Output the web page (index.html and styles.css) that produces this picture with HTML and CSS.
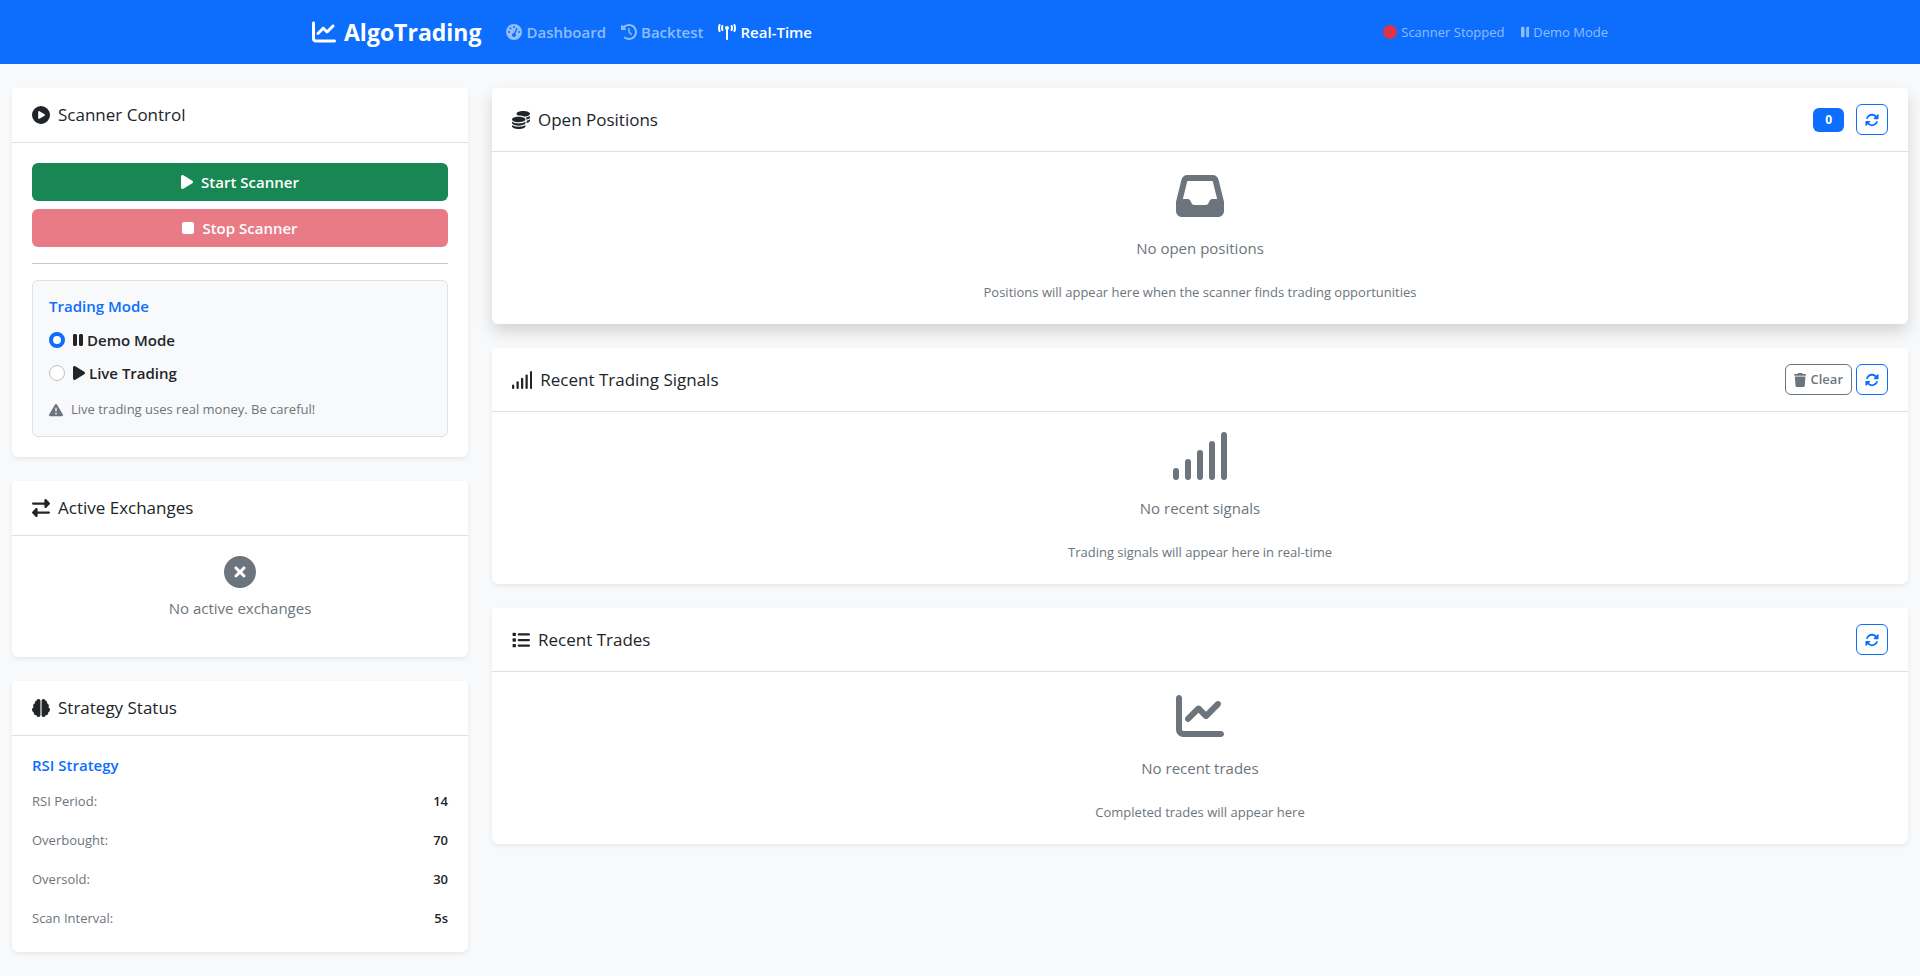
FILE: index.html
```html
<!DOCTYPE html>
<html lang="en">
<head>
<meta charset="utf-8">
<meta name="viewport" content="width=device-width, initial-scale=1">
<title>AlgoTrading - Real-Time</title>
<link rel="stylesheet" href="styles.css">
</head>
<body>
<svg class="sprite" aria-hidden="true">
  <symbol id="i-chart" viewBox="0 0 512 512"><path d="M64 64c0-17.7-14.3-32-32-32S0 46.3 0 64V400c0 44.2 35.8 80 80 80H480c17.7 0 32-14.3 32-32s-14.3-32-32-32H80c-8.8 0-16-7.2-16-16V64zm406.6 86.6c12.5-12.5 12.5-32.8 0-45.3s-32.8-12.5-45.3 0L320 210.7l-57.4-57.4c-12.5-12.5-32.8-12.5-45.3 0l-112 112c-12.5 12.5-12.5 32.8 0 45.3s32.8 12.5 45.3 0L240 221.3l57.4 57.4c12.5 12.5 32.8 12.5 45.3 0l128-128z"/></symbol>
  <symbol id="i-gauge" viewBox="0 0 512 512"><path fill-rule="evenodd" d="M0 256a256 256 0 1 1 512 0A256 256 0 1 1 0 256zM288 96a32 32 0 1 0 -64 0 32 32 0 1 0 64 0zM256 416c35.3 0 64-28.7 64-64c0-17.4-6.9-33.1-18.1-44.6L366 161.7c5.3-12.1-.2-26.3-12.3-31.6s-26.3 .2-31.6 12.3L257.9 288c-.6 0-1.3 0-1.9 0c-35.3 0-64 28.7-64 64s28.7 64 64 64zM176 144a32 32 0 1 0 -64 0 32 32 0 1 0 64 0zM96 288a32 32 0 1 0 0-64 32 32 0 1 0 0 64zm352-32a32 32 0 1 0 -64 0 32 32 0 1 0 64 0z"/></symbol>
  <symbol id="i-history" viewBox="0 0 512 512"><path d="M75 75L41 41C25.9 25.9 0 36.6 0 57.9V168c0 13.3 10.7 24 24 24H134.1c21.4 0 32.1-25.9 17-41l-30.8-30.8C155 85.5 203 64 256 64c106 0 192 86 192 192s-86 192-192 192c-40.8 0-78.6-12.7-109.7-34.4c-14.5-10.1-34.4-6.6-44.6 7.9s-6.6 34.4 7.9 44.6C151.2 495 201.7 512 256 512c141.4 0 256-114.6 256-256S397.4 0 256 0C185.3 0 121.3 28.7 75 75zm181 53c-13.3 0-24 10.7-24 24V256c0 6.4 2.5 12.5 7 17l72 72c9.4 9.4 24.6 9.4 33.9 0s9.4-24.6 0-33.9l-65-65V152c0-13.3-10.7-24-24-24z"/></symbol>
  <symbol id="i-tower" viewBox="0 0 576 512"><path d="M80.3 44C69.8 69.9 64 98.2 64 128s5.8 58.1 16.3 84c6.6 16.4-1.3 35-17.7 41.7s-35-1.3-41.7-17.7C7.4 202.6 0 166.1 0 128S7.4 53.4 20.9 20C27.6 3.6 46.2-4.3 62.6 2.3S86.9 27.6 80.3 44zM555.1 20C568.6 53.4 576 89.9 576 128s-7.4 74.6-20.9 108c-6.6 16.4-25.3 24.3-41.7 17.7S489.1 228.4 495.7 212c10.5-25.9 16.3-54.2 16.3-84s-5.8-58.1-16.3-84C489.1 27.6 497 9 513.4 2.3s35 1.3 41.7 17.7zM352 128c0 23.7-12.9 44.4-32 55.4V480c0 17.7-14.3 32-32 32s-32-14.3-32-32V183.4c-19.1-11.1-32-31.7-32-55.4c0-35.3 28.7-64 64-64s64 28.7 64 64zM170.6 76.8C163.8 92.4 160 109.7 160 128s3.8 35.6 10.6 51.2c7.1 16.2-.3 35.1-16.5 42.1s-35.1-.3-42.1-16.5c-10.3-23.6-16-49.6-16-76.8s5.7-53.2 16-76.8c7.1-16.2 25.9-23.6 42.1-16.5s23.6 25.9 16.5 42.1zM464 51.2c10.3 23.6 16 49.6 16 76.8s-5.7 53.2-16 76.8c-7.1 16.2-25.9 23.6-42.1 16.5s-23.6-25.9-16.5-42.1c6.8-15.6 10.6-32.9 10.6-51.2s-3.8-35.6-10.6-51.2c-7.1-16.2 .3-35.1 16.5-42.1s35.1 .3 42.1 16.5z"/></symbol>
  <symbol id="i-circle" viewBox="0 0 512 512"><circle cx="256" cy="256" r="256"/></symbol>
  <symbol id="i-pause" viewBox="0 0 320 512"><path d="M48 64C21.5 64 0 85.5 0 112V400c0 26.5 21.5 48 48 48H80c26.5 0 48-21.5 48-48V112c0-26.5-21.5-48-48-48H48zm192 0c-26.5 0-48 21.5-48 48V400c0 26.5 21.5 48 48 48h32c26.5 0 48-21.5 48-48V112c0-26.5-21.5-48-48-48H240z"/></symbol>
  <symbol id="i-play" viewBox="0 0 384 512"><path d="M73 39c-14.8-9.1-33.4-9.4-48.5-.9S0 62.6 0 80V432c0 17.4 9.4 33.4 24.5 41.9s33.7 8.1 48.5-.9L361 297c14.3-8.7 23-24.2 23-41s-8.7-32.2-23-41L73 39z"/></symbol>
  <symbol id="i-stop" viewBox="0 0 384 512"><path d="M0 128C0 92.7 28.7 64 64 64H320c35.3 0 64 28.7 64 64V384c0 35.3-28.7 64-64 64H64c-35.3 0-64-28.7-64-64V128z"/></symbol>
  <symbol id="i-play-circle" viewBox="0 0 512 512"><path fill-rule="evenodd" d="M0 256a256 256 0 1 1 512 0A256 256 0 1 1 0 256zM188.3 147.1c-7.6 4.2-12.3 12.3-12.3 20.9V344c0 8.7 4.7 16.7 12.3 20.9s16.8 4.1 24.3-.5l144-88c7.1-4.4 11.5-12.1 11.5-20.5s-4.4-16.1-11.5-20.5l-144-88c-7.4-4.5-16.7-4.7-24.3-.5z"/></symbol>
  <symbol id="i-warning" viewBox="0 0 512 512"><path fill-rule="evenodd" d="M256 32c14.2 0 27.3 7.5 34.5 19.8l216 368c7.3 12.4 7.3 27.7 .2 40.1S486.3 480 472 480H40c-14.3 0-27.6-7.7-34.7-20.1s-7-27.8 .2-40.1l216-368C228.7 39.5 241.8 32 256 32zm0 128c-13.3 0-24 10.7-24 24V296c0 13.3 10.7 24 24 24s24-10.7 24-24V184c0-13.3-10.7-24-24-24zm32 224a32 32 0 1 0 -64 0 32 32 0 1 0 64 0z"/></symbol>
  <symbol id="i-exchange" viewBox="0 0 512 512"><path d="M32 96l320 0V32c0-12.9 7.8-24.6 19.8-29.6s25.7-2.2 34.9 6.9l96 96c6 6 9.4 14.1 9.4 22.6s-3.4 16.6-9.4 22.6l-96 96c-9.2 9.2-22.9 11.9-34.9 6.9s-19.8-16.6-19.8-29.6V160L32 160c-17.7 0-32-14.3-32-32s14.3-32 32-32zM480 352c17.7 0 32 14.3 32 32s-14.3 32-32 32H160v64c0 12.9-7.8 24.6-19.8 29.6s-25.7 2.2-34.9-6.9l-96-96c-6-6-9.4-14.1-9.4-22.6s3.4-16.6 9.4-22.6l96-96c9.2-9.2 22.9-11.9 34.9-6.9s19.8 16.6 19.8 29.6l0 64H480z"/></symbol>
  <symbol id="i-times" viewBox="0 0 512 512"><path fill-rule="evenodd" d="M256 512A256 256 0 1 0 256 0a256 256 0 1 0 0 512zM175 175c9.4-9.4 24.6-9.4 33.9 0l47 47 47-47c9.4-9.4 24.6-9.4 33.9 0s9.4 24.6 0 33.9l-47 47 47 47c9.4 9.4 9.4 24.6 0 33.9s-24.6 9.4-33.9 0l-47-47-47 47c-9.4 9.4-24.6 9.4-33.9 0s-9.4-24.6 0-33.9l47-47-47-47c-9.4-9.4-9.4-24.6 0-33.9z"/></symbol>
  <symbol id="i-brain" viewBox="0 0 512 512"><path d="M184 0c30.9 0 56 25.1 56 56V456c0 30.9-25.1 56-56 56c-28.9 0-52.7-21.9-55.7-50.1c-5.2 1.4-10.7 2.1-16.3 2.1c-35.3 0-64-28.7-64-64c0-7.4 1.3-14.6 3.6-21.2C21.4 367.4 0 338.2 0 304c0-31.9 18.7-59.5 45.8-72.3C37.1 220.8 32 207 32 192c0-30.7 21.6-56.3 50.4-62.6C80.8 123.9 80 118 80 112c0-29.9 20.6-55.1 48.3-62.1C131.3 21.9 155.1 0 184 0zM328 0c28.9 0 52.6 21.9 55.7 49.9c27.8 7 48.3 32.1 48.3 62.1c0 6-.8 11.9-2.4 17.4c28.8 6.2 50.4 31.9 50.4 62.6c0 15-5.1 28.8-13.8 39.7C493.3 244.5 512 272.1 512 304c0 34.2-21.4 63.4-51.6 74.8c2.3 6.6 3.6 13.8 3.6 21.2c0 35.3-28.7 64-64 64c-5.6 0-11.1-.7-16.3-2.1c-3 28.2-26.8 50.1-55.7 50.1c-30.9 0-56-25.1-56-56V56c0-30.9 25.1-56 56-56z"/></symbol>
  <symbol id="i-coins" viewBox="0 0 512 512"><path d="M512 80c0 18-14.3 34.6-38.4 48c-29.1 16.1-72.5 27.5-122.3 30.9c-3.7-1.8-7.4-3.5-11.3-5C300.6 137.4 248.2 128 192 128c-8.3 0-16.4 .2-24.5 .6l-1.1-.6C142.3 114.6 128 98 128 80c0-44.2 86-80 192-80S512 35.8 512 80zM160.7 161.1c10.2-.7 20.7-1.1 31.3-1.1c62.2 0 117.4 12.3 152.5 31.4C369.3 204.9 384 221.7 384 240c0 4-.7 7.9-2.1 11.7c-4.6 13.2-17 25.3-35 35.5c-.1 .1-.3 .1-.4 .2c-.3 .2-.6 .3-.9 .5c-35 19.4-90.8 32-153.6 32c-59.6 0-112.9-11.3-148.2-29.1c-1.9-.9-3.7-1.9-5.5-2.9C14.3 274.6 0 258 0 240c0-34.8 53.4-64.5 128-75.4c10.5-1.5 21.4-2.7 32.7-3.5zM416 240c0-21.9-10.6-39.9-24.1-53.4c28.3-4.4 54.2-11.4 76.2-20.5c16.3-6.8 31.5-15.2 43.9-25.5V176c0 19.3-16.5 37.1-43.8 50.9c-14.6 7.4-32.4 13.7-52.4 18.5c.1-1.8 .2-3.5 .2-5.3zm-32 96c0 18-14.3 34.6-38.4 48c-1.8 1-3.6 1.9-5.5 2.9C304.9 404.7 251.6 416 192 416c-62.8 0-118.6-12.6-153.6-32C14.3 370.6 0 354 0 336V300.6c12.5 10.3 27.6 18.7 43.9 25.5C83.4 342.6 135.8 352 192 352s108.6-9.4 148.1-25.9c7.8-3.2 15.3-6.9 22.4-10.9c6.1-3.4 11.8-7.2 17.2-11.2c1.5-1.1 2.9-2.3 4.3-3.4V304v5.7V336zm32 0V304 278.1c19-4.2 36.5-9.5 52.1-16c16.3-6.8 31.5-15.2 43.9-25.5V272c0 10.5-5 21-14.9 30.9c-16.3 16.3-45 29.7-81.3 38.4c.1-1.7 .2-3.5 .2-5.3zM192 448c56.2 0 108.6-9.4 148.1-25.9c16.3-6.8 31.5-15.2 43.9-25.5V432c0 44.2-86 80-192 80S0 476.2 0 432V396.6c12.5 10.3 27.6 18.7 43.9 25.5C83.4 438.6 135.8 448 192 448z"/></symbol>
  <symbol id="i-signal" viewBox="0 0 576 512"><rect x="0" y="384" width="64" height="128" rx="32"/><rect x="128" y="288" width="64" height="224" rx="32"/><rect x="256" y="192" width="64" height="320" rx="32"/><rect x="384" y="96" width="64" height="416" rx="32"/><rect x="512" y="0" width="64" height="512" rx="32"/></symbol>
  <symbol id="i-list" viewBox="0 0 512 512"><rect x="16" y="48" width="96" height="96" rx="24"/><rect x="16" y="208" width="96" height="96" rx="24"/><rect x="16" y="368" width="96" height="96" rx="24"/><rect x="160" y="64" width="352" height="64" rx="32"/><rect x="160" y="224" width="352" height="64" rx="32"/><rect x="160" y="384" width="352" height="64" rx="32"/></symbol>
  <symbol id="i-inbox" viewBox="0 0 512 512"><path fill-rule="evenodd" d="M121 32C91.6 32 66 52 58.9 80.5L1.9 308.4C.6 313.5 0 318.7 0 323.9V416c0 35.3 28.7 64 64 64H448c35.3 0 64-28.7 64-64V323.9c0-5.2-.6-10.4-1.9-15.5l-57-227.9C446 52 420.4 32 391 32H121zm0 64H391l48 192H387.8c-12.1 0-23.2 6.8-28.6 17.7l-14.3 28.6c-5.4 10.8-16.5 17.7-28.6 17.7H195.8c-12.1 0-23.2-6.8-28.6-17.7l-14.3-28.6c-5.4-10.8-16.5-17.7-28.6-17.7H73L121 96z"/></symbol>
  <symbol id="i-trash" viewBox="0 0 448 512"><path d="M135.2 17.7L128 32H32C14.3 32 0 46.3 0 64S14.3 96 32 96H416c17.7 0 32-14.3 32-32s-14.3-32-32-32H320l-7.2-14.3C307.4 6.8 296.3 0 284.2 0H163.8c-12.1 0-23.2 6.8-28.6 17.7zM416 128H32L53.2 467c1.6 25.3 22.6 45 47.9 45H346.9c25.3 0 46.3-19.7 47.9-45L416 128z"/></symbol>
  <symbol id="i-sync" viewBox="0 0 512 512"><path d="M142.9 142.9c62.2-62.2 162.7-62.5 225.3-1L327 183c-6.9 6.9-8.9 17.2-5.2 26.2s12.5 14.8 22.2 14.8H472c13.3 0 24-10.7 24-24V72c0-9.7-5.8-18.5-14.8-22.2s-19.3-1.7-26.2 5.2L413.4 96.6c-87.6-86.5-228.7-86.2-315.8 1C73.2 122 55.6 150.7 44.8 181.4c-5.9 16.7 2.9 34.9 19.5 40.8s34.9-2.9 40.8-19.5c7.7-21.8 20.2-42.3 37.8-59.8zM16 312V440c0 9.7 5.8 18.5 14.8 22.2s19.3 1.7 26.2-5.2l41.6-41.6c87.6 86.5 228.7 86.2 315.8-1c24.4-24.4 42.1-53.1 52.9-83.7c5.9-16.7-2.9-34.9-19.5-40.8s-34.9 2.9-40.8 19.5c-7.7 21.8-20.2 42.3-37.8 59.8c-62.2 62.2-162.7 62.5-225.3 1L185 329c6.9-6.9 8.9-17.2 5.2-26.2s-12.5-14.8-22.2-14.8H40c-13.3 0-24 10.7-24 24z"/></symbol>
</svg>

<header class="navbar">
  <div class="navbar-inner">
    <a class="brand" href="#"><svg class="icon s24" viewBox="0 0 512 512"><use href="#i-chart"/></svg>AlgoTrading</a>
    <nav class="nav-links">
      <a class="nav-link" href="#"><svg class="icon s16" viewBox="0 0 512 512"><use href="#i-gauge"/></svg>Dashboard</a>
      <a class="nav-link" href="#"><svg class="icon s16" viewBox="0 0 512 512"><use href="#i-history"/></svg>Backtest</a>
      <a class="nav-link active" href="#"><svg class="icon s16" viewBox="0 0 576 512"><use href="#i-tower"/></svg>Real-Time</a>
    </nav>
    <div class="nav-status">
      <span class="status"><svg class="icon s14 danger" viewBox="0 0 512 512"><use href="#i-circle"/></svg>Scanner Stopped</span>
      <span class="status"><svg class="icon s14" viewBox="0 0 320 512"><use href="#i-pause"/></svg>Demo Mode</span>
    </div>
  </div>
</header>

<main class="layout">
  <aside class="column">
    <section class="card">
      <div class="card-header"><h2 class="card-title"><svg class="icon s18" viewBox="0 0 512 512"><use href="#i-play-circle"/></svg>Scanner Control</h2></div>
      <div class="card-body">
        <div class="actions">
          <button class="btn btn-success" type="button"><svg class="icon s16" viewBox="0 0 384 512"><use href="#i-play"/></svg>Start Scanner</button>
          <button class="btn btn-danger" type="button" disabled><svg class="icon s16" viewBox="0 0 384 512"><use href="#i-stop"/></svg>Stop Scanner</button>
        </div>
        <hr class="divider">
        <div class="mode-box">
          <h3 class="subtitle">Trading Mode</h3>
          <div class="check">
            <input class="radio" type="radio" name="mode" id="demo" checked>
            <label class="check-label" for="demo"><svg class="icon s16" viewBox="0 0 320 512"><use href="#i-pause"/></svg>Demo Mode</label>
          </div>
          <div class="check">
            <input class="radio" type="radio" name="mode" id="live">
            <label class="check-label" for="live"><svg class="icon s16" viewBox="0 0 384 512"><use href="#i-play"/></svg>Live Trading</label>
          </div>
          <p class="note"><svg class="icon s14" viewBox="0 0 512 512"><use href="#i-warning"/></svg>Live trading uses real money. Be careful!</p>
        </div>
      </div>
    </section>

    <section class="card">
      <div class="card-header"><h2 class="card-title"><svg class="icon s18" viewBox="0 0 512 512"><use href="#i-exchange"/></svg>Active Exchanges</h2></div>
      <div class="card-body empty empty-small">
        <svg class="icon s32" viewBox="0 0 512 512"><use href="#i-times"/></svg>
        <p class="empty-title">No active exchanges</p>
      </div>
    </section>

    <section class="card">
      <div class="card-header"><h2 class="card-title"><svg class="icon s18" viewBox="0 0 512 512"><use href="#i-brain"/></svg>Strategy Status</h2></div>
      <div class="card-body">
        <h3 class="subtitle strategy-name">RSI Strategy</h3>
        <dl class="params">
          <div class="param"><dt>RSI Period:</dt><dd>14</dd></div>
          <div class="param"><dt>Overbought:</dt><dd>70</dd></div>
          <div class="param"><dt>Oversold:</dt><dd>30</dd></div>
          <div class="param"><dt>Scan Interval:</dt><dd>5s</dd></div>
        </dl>
      </div>
    </section>
  </aside>

  <div class="column">
    <section class="card raised">
      <div class="card-header">
        <h2 class="card-title"><svg class="icon s18" viewBox="0 0 512 512"><use href="#i-coins"/></svg>Open Positions</h2>
        <div class="tools"><span class="badge">0</span><button class="btn-sm" type="button" aria-label="Refresh positions"><svg class="icon s14" viewBox="0 0 512 512"><use href="#i-sync"/></svg></button></div>
      </div>
      <div class="card-body empty">
        <svg class="icon s48" viewBox="0 0 512 512"><use href="#i-inbox"/></svg>
        <p class="empty-title">No open positions</p>
        <p class="empty-text">Positions will appear here when the scanner finds trading opportunities</p>
      </div>
    </section>

    <section class="card">
      <div class="card-header">
        <h2 class="card-title"><svg class="icon s18" viewBox="0 0 576 512"><use href="#i-signal"/></svg>Recent Trading Signals</h2>
        <div class="tools"><button class="btn-sm muted" type="button"><svg class="icon s14" viewBox="0 0 448 512"><use href="#i-trash"/></svg>Clear</button><button class="btn-sm" type="button" aria-label="Refresh signals"><svg class="icon s14" viewBox="0 0 512 512"><use href="#i-sync"/></svg></button></div>
      </div>
      <div class="card-body empty">
        <svg class="icon s48" viewBox="0 0 576 512"><use href="#i-signal"/></svg>
        <p class="empty-title">No recent signals</p>
        <p class="empty-text">Trading signals will appear here in real-time</p>
      </div>
    </section>

    <section class="card">
      <div class="card-header">
        <h2 class="card-title"><svg class="icon s18" viewBox="0 0 512 512"><use href="#i-list"/></svg>Recent Trades</h2>
        <div class="tools"><button class="btn-sm" type="button" aria-label="Refresh trades"><svg class="icon s14" viewBox="0 0 512 512"><use href="#i-sync"/></svg></button></div>
      </div>
      <div class="card-body empty">
        <svg class="icon s48" viewBox="0 0 512 512"><use href="#i-chart"/></svg>
        <p class="empty-title">No recent trades</p>
        <p class="empty-text">Completed trades will appear here</p>
      </div>
    </section>
  </div>
</main>
</body>
</html>
```

FILE: styles.css
```css
:root {
  --primary: #0d6efd;
  --success: #198754;
  --danger: #dc3545;
  --muted: #6c757d;
  --text: #212529;
  --line: #dee2e6;
  --bg: #f8f9fa;
}

*, *::before, *::after { box-sizing: border-box; }

body {
  margin: 0;
  background: var(--bg);
  color: var(--text);
  font-family: "Segoe UI", "Open Sans", "Noto Sans", sans-serif;
  font-size: 15px;
  line-height: 24px;
}

h2, h3, p, dl, dd { margin: 0; }
button { font-family: inherit; cursor: pointer; }

.sprite { display: none; }

/* Icons scale by height; the width follows each viewBox */
.icon { display: block; flex: none; width: auto; fill: currentColor; }
.s14 { height: 14px; }
.s16 { height: 16px; }
.s18 { height: 18px; }
.s24 { height: 24px; }
.s32 { height: 32px; }
.s48 { height: 48px; }
.danger { color: var(--danger); }

/* Navbar */
.navbar { background: var(--primary); }
.navbar-inner {
  display: flex;
  align-items: center;
  max-width: 1320px;
  min-height: 64px;
  margin: 0 auto;
  padding: 0 12px;
}
.brand {
  display: flex;
  align-items: center;
  gap: 8px;
  margin-right: 25px;
  color: #fff;
  font-size: 23px;
  font-weight: 700;
  line-height: 36px;
  text-decoration: none;
}
.nav-links { display: flex; gap: 15px; }
.nav-link {
  display: flex;
  align-items: center;
  gap: 4px;
  color: rgba(255, 255, 255, .55);
  font-weight: 600;
  text-decoration: none;
}
.nav-link.active { color: #fff; }
.nav-status {
  display: flex;
  gap: 16px;
  margin-left: auto;
  color: rgba(255, 255, 255, .55);
  font-size: 13px;
}
.status { display: flex; align-items: center; gap: 4px; }

/* Page grid */
.layout {
  display: grid;
  grid-template-columns: minmax(0, 456fr) minmax(0, 1416fr);
  gap: 24px;
  align-items: start;
  padding: 24px 12px;
}
.column { display: grid; gap: 24px; }

/* Cards */
.card {
  background: #fff;
  border-radius: 3px 3px 6px 6px;
  box-shadow: 0 2px 4px rgba(0, 0, 0, .075);
}
.card.raised { box-shadow: 0 8px 16px rgba(0, 0, 0, .15); }
.card-header {
  display: flex;
  align-items: center;
  justify-content: space-between;
  padding: 16px 20px;
  border-bottom: 1px solid var(--line);
}
.card-title {
  display: flex;
  align-items: center;
  gap: 8px;
  font-size: 17px;
  font-weight: 500;
  line-height: 22px;
}
.card-body { padding: 20px; }

/* Buttons */
.actions { display: grid; gap: 8px; }
.btn {
  display: flex;
  align-items: center;
  justify-content: center;
  gap: 8px;
  padding: 7px 12px;
  border: 0;
  border-radius: 6px;
  color: #fff;
  font-size: 15px;
  font-weight: 600;
  line-height: 24px;
}
.btn-success { background: var(--success); }
.btn-danger { background: var(--danger); }
.btn:disabled { opacity: .65; cursor: default; }
.tools { display: flex; align-items: center; gap: 4px; }
.btn-sm {
  display: flex;
  align-items: center;
  gap: 4px;
  min-height: 31px;
  padding: 4px 8px;
  border: 1px solid var(--primary);
  border-radius: 6px;
  background: transparent;
  color: var(--primary);
  font-size: 13px;
  font-weight: 600;
  line-height: 21px;
}
.btn-sm.muted { border-color: var(--muted); color: var(--muted); }
.badge {
  margin-right: 8px;
  padding: 6px 12px;
  border-radius: 6px;
  background: var(--primary);
  color: #fff;
  font-size: 12px;
  font-weight: 700;
  line-height: 12px;
}

/* Trading mode */
.divider { margin: 16px 0; border: 0; border-top: 1px solid #c7c8c9; }
.mode-box {
  padding: 16px;
  border: 1px solid var(--line);
  border-radius: 6px;
  background: var(--bg);
}
.subtitle {
  margin-bottom: 12px;
  color: var(--primary);
  font-size: 15px;
  font-weight: 600;
  line-height: 19px;
}
.check { display: flex; align-items: center; gap: 8px; margin-bottom: 9px; }
.radio {
  appearance: none;
  flex: none;
  width: 16px;
  height: 16px;
  margin: 0;
  border: 1px solid #bfbfbf;
  border-radius: 50%;
  background: #fff;
}
.radio:checked { border: 4px solid var(--primary); }
.check-label { display: flex; align-items: center; gap: 4px; font-weight: 600; }
.note {
  display: flex;
  align-items: center;
  gap: 8px;
  padding-top: 5px;
  color: var(--muted);
  font-size: 13px;
  line-height: 21px;
}

/* Empty states */
.empty {
  display: flex;
  flex-direction: column;
  align-items: center;
  color: var(--muted);
  text-align: center;
}
.empty-title { margin-top: 16px; }
.empty-text { margin-top: 20px; font-size: 13px; }
.empty-small .empty-title { margin: 8px 0 17px; }

/* Strategy parameters */
.strategy-name { margin-bottom: 15px; }
.params {
  display: grid;
  gap: 16px;
  padding-bottom: 2px;
  font-size: 13px;
  line-height: 23px;
}
.param { display: flex; justify-content: space-between; }
.param dt { color: var(--muted); }
.param dd { font-weight: 600; }
```
